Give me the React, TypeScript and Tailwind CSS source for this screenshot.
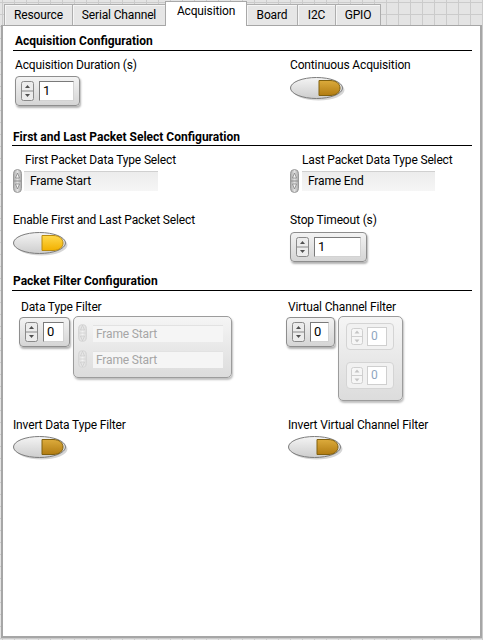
import React from "react";

function Defs() {
  return (
    <svg width="0" height="0" className="absolute">
      <defs>
        <linearGradient id="tgBody" x1="0" y1="0" x2="0" y2="1">
          <stop offset="0" stopColor="#f4f4f4" />
          <stop offset="1" stopColor="#cdcdcd" />
        </linearGradient>
        <linearGradient id="goldOff" x1="0" y1="0" x2="0" y2="1">
          <stop offset="0" stopColor="#dcab3c" />
          <stop offset="1" stopColor="#b27c12" />
        </linearGradient>
        <linearGradient id="goldOn" x1="0" y1="0" x2="0" y2="1">
          <stop offset="0" stopColor="#ffd94c" />
          <stop offset="1" stopColor="#f2b000" />
        </linearGradient>
        <linearGradient id="ringSpin" x1="0" y1="0" x2="1" y2="0">
          <stop offset="0" stopColor="#a9a9a9" />
          <stop offset="0.5" stopColor="#e2e2e2" />
          <stop offset="1" stopColor="#a9a9a9" />
        </linearGradient>
        <linearGradient id="ringSpinDim" x1="0" y1="0" x2="1" y2="0">
          <stop offset="0" stopColor="#d8d8d8" />
          <stop offset="0.5" stopColor="#f2f2f2" />
          <stop offset="1" stopColor="#d8d8d8" />
        </linearGradient>
      </defs>
    </svg>
  );
}

function Toggle({ on }: { on?: boolean }) {
  return (
    <svg width="56" height="25" viewBox="0 0 56 25" className="block">
      <ellipse cx="28.5" cy="13" rx="26" ry="10.5" fill="rgba(0,0,0,0.16)" />
      <ellipse cx="26.5" cy="11" rx="26" ry="10.5" fill="url(#tgBody)" stroke="#7c7c7c" />
      <path
        d="M29 3.5 H40 C46.5 3.5 50 7 50 11 C50 15 46.5 18.5 40 18.5 H29 Z"
        fill={on ? "url(#goldOn)" : "url(#goldOff)"}
        stroke={on ? "#b88a10" : "#80600f"}
      />
    </svg>
  );
}

function Spin({ dim, h = 20, w = 13 }: { dim?: boolean; h?: number; w?: number }) {
  const stroke = dim ? "#cfcfcf" : "#8a8a8a";
  const arrow = dim ? "#c4c4c4" : "#505050";
  const half = h / 2;
  const cx = w / 2;
  return (
    <svg width={w} height={h} viewBox={`0 0 ${w} ${h}`} className="block shrink-0">
      <rect x="0.5" y="0.5" width={w - 1} height={h - 1} rx="2" fill={dim ? "#f6f6f6" : "#ececec"} stroke={stroke} />
      <line x1="1" y1={half} x2={w - 1} y2={half} stroke={stroke} />
      <path d={`M${cx - 2.5} ${half - 3} L${cx} ${half - 6} L${cx + 2.5} ${half - 3} Z`} fill={arrow} />
      <path d={`M${cx - 2.5} ${half + 3} L${cx} ${half + 6} L${cx + 2.5} ${half + 3} Z`} fill={arrow} />
    </svg>
  );
}

function RingSpin({ dim, h = 24 }: { dim?: boolean; h?: number }) {
  const arrow = dim ? "#e6e6e6" : "#f4f4f4";
  const edge = dim ? "#c8c8c8" : "#7a7a7a";
  return (
    <svg width="9" height={h} viewBox={`0 0 9 ${h}`} className="block shrink-0">
      <rect x="0.5" y="0.5" width="8" height={h - 1} rx="4" fill={dim ? "url(#ringSpinDim)" : "url(#ringSpin)"} stroke={dim ? "#d6d6d6" : "#9a9a9a"} />
      <line x1="1" y1={h / 2} x2="8" y2={h / 2} stroke={dim ? "#d6d6d6" : "#8c8c8c"} />
      <path d={`M2.5 ${h / 2 - 3} L4.5 ${h / 2 - 8} L6.5 ${h / 2 - 3} Z`} fill={arrow} stroke={edge} strokeWidth="0.7" />
      <path d={`M2.5 ${h / 2 + 3} L4.5 ${h / 2 + 8} L6.5 ${h / 2 + 3} Z`} fill={arrow} stroke={edge} strokeWidth="0.7" />
    </svg>
  );
}

function Numeric({ value, fieldW }: { value: string; fieldW: string }) {
  return (
    <div className="flex w-fit items-center gap-[5px] rounded-[4px] border border-[#8e8e8e] bg-gradient-to-b from-[#f3f3f3] to-[#d5d5d5] px-[5px] py-[4px] shadow-[1px_2px_2px_rgba(0,0,0,0.3)]">
      <Spin />
      <div className={`${fieldW} h-[20px] border border-[#7a7a7a] border-b-[#d2d2d2] border-r-[#d2d2d2] bg-white pl-[3px] text-[13px] leading-[18px] text-black`}>
        {value}
      </div>
    </div>
  );
}

function DimNumeric() {
  return (
    <div className="flex w-[48px] items-center gap-[4px] rounded-[4px] border border-[#d4d4d4] bg-[#f1f1f1] px-[4px] py-[3px]">
      <Spin dim h={17} w={12} />
      <div className="h-[19px] w-[20px] border border-[#cfcfcf] bg-white pl-[3px] text-[12px] leading-[17px] text-[#8fa6bf]">0</div>
    </div>
  );
}

function Ring({ text, fieldW, gap }: { text: string; fieldW: string; gap: string }) {
  return (
    <div className={`flex items-center ${gap}`}>
      <RingSpin />
      <div className={`${fieldW} h-[20px] border-t border-[#d0d0d0] bg-gradient-to-b from-[#ececec] to-[#f6f6f6] pl-[6px] text-[12px] leading-[19px] text-black`}>
        {text}
      </div>
    </div>
  );
}

function DimRing({ text }: { text: string }) {
  return (
    <div className="flex items-center gap-[6px]">
      <RingSpin dim h={18} />
      <div className="h-[17px] w-[130px] border-t border-[#e2e2e2] bg-[#f5f5f5] pl-[3px] text-[12px] leading-[16px] text-[#a6a6a6]">{text}</div>
    </div>
  );
}

function Label({ children, className = "" }: { children: React.ReactNode; className?: string }) {
  return <div className={`text-[12px] leading-[16px] text-black whitespace-nowrap ${className}`}>{children}</div>;
}

function Header({ children, className = "" }: { children: React.ReactNode; className?: string }) {
  return (
    <div className={`border-b border-black text-[12px] font-bold leading-[16px] tracking-normal text-black ${className}`}>{children}</div>
  );
}

const tabs = [
  { label: "Resource", w: "w-[69px]" },
  { label: "Serial Channel", w: "w-[94px]" },
  { label: "Acquisition", w: "w-[82px]", active: true },
  { label: "Board", w: "w-[52px]" },
  { label: "I2C", w: "w-[39px]" },
  { label: "GPIO", w: "w-[46px]" },
];

export default function App() {
  return (
    <div className="relative h-[640px] w-[483px] overflow-hidden bg-[#e4e4e4] bg-[linear-gradient(to_right,#cbcbcb_1px,transparent_1px),linear-gradient(to_bottom,#cbcbcb_1px,transparent_1px)] bg-[size:12px_12px] bg-[position:2px_2px] font-['Roboto',sans-serif] tracking-[-0.15px]">
      <Defs />
      {/* tab strip */}
      <div className="flex h-[25px] items-end pl-[4px]">
        {tabs.map((t, i) =>
          t.active ? (
            <div
              key={t.label}
              className={`${t.w} relative z-10 -mb-px h-[25px] -ml-px border border-b-0 border-[#a8a8a8] bg-white pt-[1px] text-center text-[12px] leading-[16px] text-black`}
            >
              {t.label}
            </div>
          ) : (
            <div
              key={t.label}
              className={`${t.w} ${i > 0 ? "-ml-px" : ""} h-[21px] border border-b-0 border-[#adadad] bg-[#e6e6e6] pt-[2px] text-center text-[12px] leading-[16px] text-black shadow-[inset_1px_1px_0_#f6f6f6]`}
            >
              {t.label}
            </div>
          )
        )}
      </div>

      {/* panel */}
      <div className="ml-[1px] h-[613px] w-[481px] border-x-2 border-b-2 border-t border-[#a6a6a6] bg-white">
        <Header className="ml-[10px] mt-[7px] w-[459px] pb-[1px] pl-[2px]">Acquisition Configuration</Header>

        <div className="mt-[6px] flex pl-[12px]">
          <div className="w-[275px]">
            <Label>Acquisition Duration (s)</Label>
            <div className="mt-[3px]">
              <Numeric value="1" fieldW="w-[35px]" />
            </div>
          </div>
          <div>
            <Label>Continuous Acquisition</Label>
            <div className="mt-[4px]">
              <Toggle />
            </div>
          </div>
        </div>

        <Header className="ml-[9px] mt-[23px] w-[460px] pl-[1px]">First and Last Packet Select Configuration</Header>

        <div className="mt-[6px] flex pl-[10px]">
          <div className="w-[277px]">
            <Label className="ml-[12px]">First Packet Data Type Select</Label>
            <div className="mt-[1px]">
              <Ring text="Frame Start" fieldW="w-[134px]" gap="gap-[2px]" />
            </div>
          </div>
          <div>
            <Label className="ml-[12px]">Last Packet Data Type Select</Label>
            <div className="mt-[1px]">
              <Ring text="Frame End" fieldW="w-[133px]" gap="gap-[3px]" />
            </div>
          </div>
        </div>

        <div className="mt-[19px] flex pl-[10px]">
          <div className="w-[277px]">
            <Label>Enable First and Last Packet Select</Label>
            <div className="mt-[4px]">
              <Toggle on />
            </div>
          </div>
          <div>
            <Label>Stop Timeout (s)</Label>
            <div className="mt-[4px]">
              <Numeric value="1" fieldW="w-[47px]" />
            </div>
          </div>
        </div>

        <Header className="ml-[9px] mt-[11px] w-[460px] pb-[1px] pl-[1px]">Packet Filter Configuration</Header>

        <div className="mt-[8px] flex pl-[9px]">
          <div className="w-[274px]">
            <Label className="ml-[9px]">Data Type Filter</Label>
            <div className="mt-[1px] flex items-start">
              <div className="ml-[7px] mt-[1px]">
                <Numeric value="0" fieldW="w-[21px]" />
              </div>
              <div className="ml-[3px] flex h-[62px] w-[159px] flex-col gap-[8px] rounded-[5px] border border-[#9c9c9c] bg-gradient-to-b from-[#f5f5f5] to-[#dcdcdc] pl-[4px] pt-[7px] shadow-[1px_2px_2px_rgba(0,0,0,0.25)]">
                <DimRing text="Frame Start" />
                <DimRing text="Frame Start" />
              </div>
            </div>
          </div>
          <div>
            <Label className="ml-[2px]">Virtual Channel Filter</Label>
            <div className="mt-[1px] flex items-start">
              <div className="mt-[1px]">
                <Numeric value="0" fieldW="w-[19px]" />
              </div>
              <div className="ml-[3px] flex h-[85px] w-[65px] flex-col gap-[12px] rounded-[5px] border border-[#9c9c9c] bg-gradient-to-b from-[#f5f5f5] to-[#dcdcdc] pl-[7px] pt-[6px] shadow-[1px_2px_2px_rgba(0,0,0,0.25)]">
                <DimNumeric />
                <DimNumeric />
              </div>
            </div>
          </div>
        </div>

        <div className="mt-[16px] flex pl-[10px]">
          <div className="w-[275px]">
            <Label>Invert Data Type Filter</Label>
            <div className="mt-[3px]">
              <Toggle />
            </div>
          </div>
          <div>
            <Label>Invert Virtual Channel Filter</Label>
            <div className="mt-[3px]">
              <Toggle />
            </div>
          </div>
        </div>
      </div>
    </div>
  );
}
